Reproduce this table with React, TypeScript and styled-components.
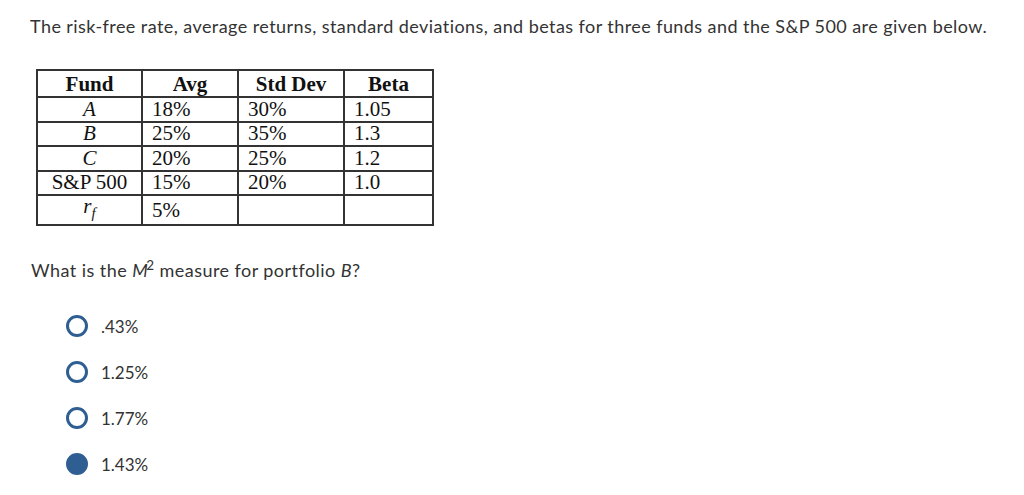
import React from 'react';
import styled, { createGlobalStyle } from 'styled-components';

const GlobalStyle = createGlobalStyle`
  html, body {
    margin: 0;
    padding: 0;
    background: #fff;
  }
  body {
    font-family: Lato, "Noto Sans", Arial, sans-serif;
    color: #333;
  }
`;

const Page = styled.div`
  width: 1024px;
  height: 495px;
  padding: 14px 0 0 30px;
  box-sizing: border-box;
  overflow: hidden;
`;

const Intro = styled.p`
  margin: 0;
  font-size: 18px;
  letter-spacing: 0.43px;
  line-height: 24px;
  color: #333;
`;

const FundTable = styled.table`
  margin: 31px 0 0 6px;
  border-collapse: collapse;
  font-family: "Liberation Serif", "Times New Roman", serif;
  font-size: 21px;
  color: #111;
  border: 2px solid #333;
`;

const HeadCell = styled.th<{ w: number }>`
  width: ${({ w }) => w}px;
  height: 27px;
  padding: 0;
  border: 2px solid #333;
  font-weight: bold;
  text-align: center;
  line-height: 22px;
  box-sizing: border-box;
`;

const Cell = styled.td<{ center?: boolean }>`
  height: 24.5px;
  padding: 0 0 0 ${({ center }) => (center ? 0 : 9)}px;
  border: 2px solid #333;
  text-align: ${({ center }) => (center ? 'center' : 'left')};
  font-style: ${({ center }) => (center ? 'italic' : 'normal')};
  line-height: 21px;
  box-sizing: border-box;
`;

const Plain = styled.span`
  font-style: normal;
`;

const Sub = styled.sub`
  font-size: 0.7em;
`;

const Question = styled.p`
  margin: 27px 0 0 1px;
  font-size: 18px;
  letter-spacing: 0.45px;
  line-height: 24px;
  color: #333;
`;

const Sup = styled.sup`
  font-size: 0.75em;
  margin-left: -2px;
`;

const Options = styled.div`
  display: flex;
  flex-direction: column;
  gap: 24px;
  margin: 33px 0 0 36px;
`;

const Option = styled.label`
  display: flex;
  align-items: center;
  gap: 13px;
  height: 22px;
  font-size: 17px;
  color: #333;
`;

const Radio = styled.span<{ checked?: boolean }>`
  width: 22px;
  height: 22px;
  border-radius: 50%;
  box-sizing: border-box;
  border: 3px solid #2f5e93;
  background: ${({ checked }) => (checked ? '#2f5e93' : '#fff')};
  flex: none;
`;

const rows = [
  { fund: 'A', avg: '18%', sd: '30%', beta: '1.05' },
  { fund: 'B', avg: '25%', sd: '35%', beta: '1.3' },
  { fund: 'C', avg: '20%', sd: '25%', beta: '1.2' },
  { fund: <Plain>S&amp;P 500</Plain>, avg: '15%', sd: '20%', beta: '1.0' },
  {
    fund: (
      <>
        r<Sub>f</Sub>
      </>
    ),
    avg: '5%',
    sd: '',
    beta: '',
  },
];

const answers = ['.43%', '1.25%', '1.77%', '1.43%'];

export default function App() {
  return (
    <Page>
      <GlobalStyle />
      <Intro>
        The risk-free rate, average returns, standard deviations, and betas for
        three funds and the S&amp;P 500 are given below.
      </Intro>

      <FundTable>
        <thead>
          <tr>
            <HeadCell w={105}>Fund</HeadCell>
            <HeadCell w={96}>Avg</HeadCell>
            <HeadCell w={106}>Std Dev</HeadCell>
            <HeadCell w={89}>Beta</HeadCell>
          </tr>
        </thead>
        <tbody>
          {rows.map((r, i) => (
            <tr key={i}>
              <Cell center>{r.fund}</Cell>
              <Cell>{r.avg}</Cell>
              <Cell>{r.sd}</Cell>
              <Cell>{r.beta}</Cell>
            </tr>
          ))}
        </tbody>
      </FundTable>

      <Question>
        What is the <i>M</i>
        <Sup>2</Sup> measure for portfolio <i>B</i>?
      </Question>

      <Options>
        {answers.map((a, i) => (
          <Option key={a}>
            <Radio checked={i === 3} />
            {a}
          </Option>
        ))}
      </Options>
    </Page>
  );
}
